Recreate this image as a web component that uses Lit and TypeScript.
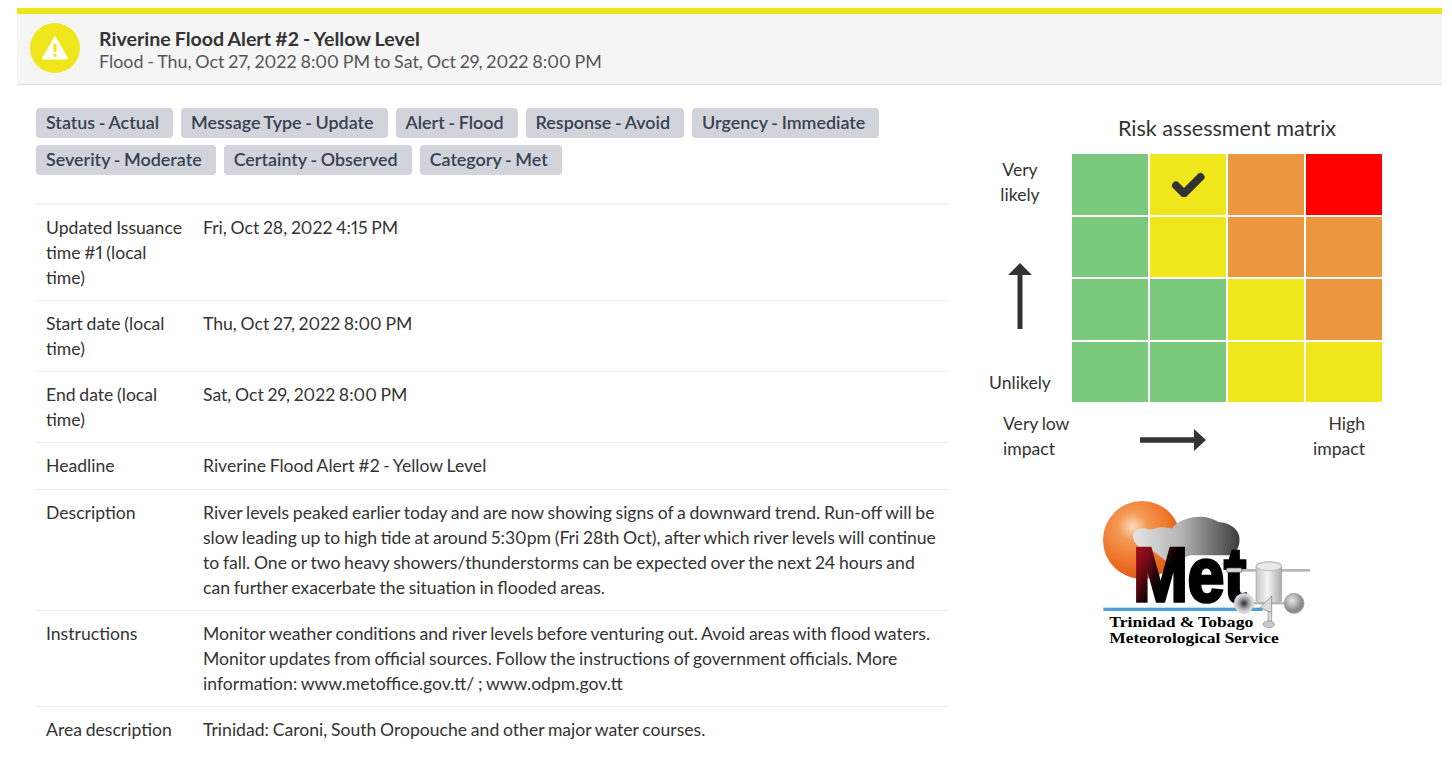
import { LitElement, html, css, svg } from 'lit';
import { customElement } from 'lit/decorators.js';

const G = '#7ac97c';
const Y = '#efe61c';
const O = '#ec963f';
const R = '#ff0000';

const matrix = [
  [G, Y, O, R],
  [G, Y, O, O],
  [G, G, Y, O],
  [G, G, Y, Y],
];

const chips = [
  'Status - Actual',
  'Message Type - Update',
  'Alert - Flood',
  'Response - Avoid',
  'Urgency - Immediate',
  'Severity - Moderate',
  'Certainty - Observed',
  'Category - Met',
];

const rows = [
  ['Updated Issuance time #1 (local time)', 'Fri, Oct 28, 2022 4:15 PM'],
  ['Start date (local time)', 'Thu, Oct 27, 2022 8:00 PM'],
  ['End date (local time)', 'Sat, Oct 29, 2022 8:00 PM'],
  ['Headline', 'Riverine Flood Alert #2 - Yellow Level'],
  [
    'Description',
    'River levels peaked earlier today and are now showing signs of a downward trend. Run-off will be slow leading up to high tide at around 5:30pm (Fri 28th Oct), after which river levels will continue to fall. One or two heavy showers/thunderstorms can be expected over the next 24 hours and can further exacerbate the situation in flooded areas.',
  ],
  [
    'Instructions',
    'Monitor weather conditions and river levels before venturing out. Avoid areas with flood waters. Monitor updates from official sources. Follow the instructions of government officials. More information: www.metoffice.gov.tt/ ; www.odpm.gov.tt',
  ],
  ['Area description', 'Trinidad: Caroni, South Oropouche and other major water courses.'],
];

const logo = svg`
  <defs>
    <radialGradient id="sun" cx="0.38" cy="0.33" r="0.72">
      <stop offset="0" stop-color="#fbdcc0"/>
      <stop offset="0.25" stop-color="#f59a55"/>
      <stop offset="0.7" stop-color="#ec6f24"/>
      <stop offset="1" stop-color="#d9581a"/>
    </radialGradient>
    <linearGradient id="cloud" x1="0" x2="1" y1="0" y2="0">
      <stop offset="0" stop-color="#e6e6e6"/>
      <stop offset="0.45" stop-color="#b4b4b4"/>
      <stop offset="1" stop-color="#3c3c3c"/>
    </linearGradient>
    <linearGradient id="met" x1="0" x2="1" y1="0" y2="0.45">
      <stop offset="0" stop-color="#b01028"/>
      <stop offset="0.2" stop-color="#800c18"/>
      <stop offset="0.42" stop-color="#000"/>
      <stop offset="1" stop-color="#000"/>
    </linearGradient>
    <linearGradient id="can" x1="0" x2="1" y1="0" y2="0">
      <stop offset="0" stop-color="#c4c8c8"/>
      <stop offset="0.45" stop-color="#f4f4f4"/>
      <stop offset="1" stop-color="#a8acac"/>
    </linearGradient>
    <radialGradient id="cup">
      <stop offset="0" stop-color="#2a2a30"/>
      <stop offset="0.55" stop-color="#a8a8ac"/>
      <stop offset="1" stop-color="#ececec"/>
    </radialGradient>
    <radialGradient id="ball" cx="0.4" cy="0.35">
      <stop offset="0" stop-color="#e8e8e8"/>
      <stop offset="1" stop-color="#8c8c8c"/>
    </radialGradient>
  </defs>
  <circle cx="156" cy="147" r="117" fill="url(#sun)"/>
  <path fill="url(#cloud)" d="M129 135c0-16 20-26 40-22 12 4 20 2 30-2 14-4 34-2 46 2 10-16 40-36 84-36 26 0 44 8 56 16 32 2 56 18 62 40 4 18 0 36-10 50l-14 10H300l-60 26-66-50h-24c-12-8-21-20-21-34z"/>
  <text x="130" y="331" font-family="Liberation Sans, sans-serif" font-weight="700" font-size="230" textLength="338" lengthAdjust="spacingAndGlyphs" fill="url(#met)" stroke="url(#met)" stroke-width="11">Met</text>
  <rect x="40" y="350" width="478" height="10" fill="#4d9fd6"/>
  <rect x="410" y="234" width="250" height="8" fill="#b4b8b8"/>
  <rect x="410" y="231" width="45" height="13" rx="3" fill="#d8d8d8" stroke="#555" stroke-width="2"/>
  <path d="M498 226c0-18 77-18 77 0v104c-10 10-67 10-77 0z" fill="url(#can)" stroke="#9a9e9e" stroke-width="2"/>
  <ellipse cx="537" cy="226" rx="38" ry="13" fill="#e8eaea" stroke="#a4a8a8" stroke-width="2"/>
  <rect x="490" y="334" width="100" height="6" fill="#a8acac"/>
  <path d="M545 315l-35 35 35 16z" fill="#d8dcdc" stroke="#777" stroke-width="2"/>
  <path d="M534 362h11v32h-11z" fill="#d4d6d6" stroke="#888" stroke-width="2"/>
  <ellipse cx="536" cy="400" rx="17" ry="10" fill="#c8caca" stroke="#888" stroke-width="2"/>
  <circle cx="462" cy="337" r="30" fill="url(#cup)" stroke="#bbb" stroke-width="2"/>
  <circle cx="612" cy="337" r="30" fill="url(#ball)" stroke="#999" stroke-width="2"/>
  <g font-family="Liberation Serif, serif" font-weight="700" fill="#000">
    <text x="58" y="407" font-size="42" textLength="432" lengthAdjust="spacingAndGlyphs">Trinidad &amp; Tobago</text>
    <text x="58" y="456" font-size="42" textLength="508" lengthAdjust="spacingAndGlyphs">Meteorological Service</text>
  </g>
`;

@customElement('app-root')
export class AppRoot extends LitElement {
  static styles = css`
    :host {
      display: block;
      padding: 8px 10px 0 17px;
      font-family: 'Lato', sans-serif;
      font-size: 17.6px;
      word-spacing: -0.8px;
      line-height: 25px;
      font-variant-numeric: proportional-nums;
      color: #333;
      background: #fff;
    }

    .alert-head {
      display: flex;
      align-items: center;
      gap: 19px;
      height: 77px;
      padding-left: 13px;
      box-sizing: border-box;
      background: #f5f5f5;
      border-top: 6px solid #efe61c;
      border-bottom: 1px solid #ddd;
    }

    .alert-icon {
      width: 50px;
      height: 50px;
      margin-top: -2px;
      border-radius: 50%;
      background: #efe61c;
      display: flex;
      align-items: center;
      justify-content: center;
      flex: none;
    }

    .alert-title {
      font-size: 19.6px;
      line-height: 23px;
      font-weight: 700;
      color: #333;
    }

    .alert-sub {
      font-size: 17.9px;
      line-height: 22px;
      color: #555;
    }

    .body {
      display: flex;
      padding: 23px 0 0 19px;
    }

    .details {
      width: 912px;
      flex: none;
    }

    .chips {
      display: flex;
      flex-wrap: wrap;
      gap: 7px 8px;
      margin-bottom: 28px;
    }

    .chip {
      background: #d1d5db;
      color: #374151;
      border-radius: 4px;
      height: 30px;
      line-height: 29px;
      padding: 0 14px 0 10px;
      font-size: 17.9px;
      font-weight: 600;
    }

    table {
      width: 100%;
      border-collapse: collapse;
    }

    td {
      padding: 10px;
      vertical-align: top;
      border-top: 1px solid #eee;
    }

    tr:first-child td {
      border-top: 2px solid #f2f2f2;
    }

    tr:nth-child(4) td {
      padding-bottom: 11px;
    }

    td.key {
      width: 137px;
    }

    .risk {
      width: 414px;
      margin-left: 20px;
      flex: none;
    }

    .risk-title {
      margin: 6px 0 0;
      padding-left: 104px;
      width: 310px;
      text-align: center;
      font-size: 21.6px;
      font-weight: 400;
      word-spacing: 0;
      line-height: 28px;
      box-sizing: content-box;
    }

    .risk-grid {
      display: grid;
      grid-template-columns: 104px auto;
      margin-top: 12px;
    }

    .y-axis {
      display: flex;
      flex-direction: column;
      align-items: center;
      justify-content: space-between;
      text-align: center;
      padding: 3px 0 7px;
    }

    .y-arrow {
      margin-top: 14px;
    }

    .cells {
      display: grid;
      grid-template-columns: repeat(4, 76px);
      grid-auto-rows: 60.5px;
      gap: 2px;
    }

    .cell {
      display: flex;
      align-items: center;
      justify-content: center;
    }

    .x-axis {
      display: flex;
      justify-content: space-between;
      align-items: center;
      margin: 9px 0 0 35px;
      width: 362px;
    }

    .x-arrow {
      margin: 8px 37px 0 0;
    }

    .x-axis .end {
      text-align: right;
    }

    .logo {
      display: block;
      margin: 30px 0 0 122px;
    }
  `;

  render() {
    return html`
      <div class="alert-head">
        <div class="alert-icon">
          <svg width="26" height="24" viewBox="0 0 26 24">
            <path d="M13 1.5L25 22.5H1z" fill="#fff" stroke="#fff" stroke-width="2" stroke-linejoin="round"/>
            <rect x="11.4" y="7.5" width="3.2" height="8.5" rx="1" fill="#efe61c"/>
            <rect x="11.4" y="17.6" width="3.2" height="3.2" rx="0.8" fill="#efe61c"/>
          </svg>
        </div>
        <div>
          <div class="alert-title">Riverine Flood Alert #2 - Yellow Level</div>
          <div class="alert-sub">Flood - Thu, Oct 27, 2022 8:00 PM to Sat, Oct 29, 2022 8:00 PM</div>
        </div>
      </div>
      <div class="body">
        <div class="details">
          <div class="chips">
            ${chips.map((c) => html`<span class="chip">${c}</span>`)}
          </div>
          <table>
            ${rows.map(
              (r) => html`<tr><td class="key">${r[0]}</td><td>${r[1]}</td></tr>`
            )}
          </table>
        </div>
        <div class="risk">
          <h3 class="risk-title">Risk assessment matrix</h3>
          <div class="risk-grid">
            <div class="y-axis">
              <div>Very<br />likely</div>
              <svg class="y-arrow" width="24" height="66" viewBox="0 0 24 66">
                <path d="M12 0L24 12H14.5V66H9.5V12H0z" fill="#333"/>
              </svg>
              <div>Unlikely</div>
            </div>
            <div class="cells">
              ${matrix.map((row, y) =>
                row.map(
                  (c, x) => html`<div class="cell" style="background:${c}">
                    ${x === 1 && y === 0
                      ? html`<svg width="34" height="26" viewBox="0 0 34 26">
                          <path d="M5 14.5l8 8L29.5 6" fill="none" stroke="#333" stroke-width="8" stroke-linejoin="round" stroke-linecap="round"/>
                        </svg>`
                      : ''}
                  </div>`
                )
              )}
            </div>
          </div>
          <div class="x-axis">
            <div>Very low<br />impact</div>
            <svg class="x-arrow" width="66" height="22" viewBox="0 0 66 22">
              <path d="M0 8.2H54V0L66 11L54 22V13.8H0z" fill="#333"/>
            </svg>
            <div class="end">High<br />impact</div>
          </div>
          <svg class="logo" width="230" height="165" viewBox="0 0 690 495">${logo}</svg>
        </div>
      </div>
    `;
  }
}
